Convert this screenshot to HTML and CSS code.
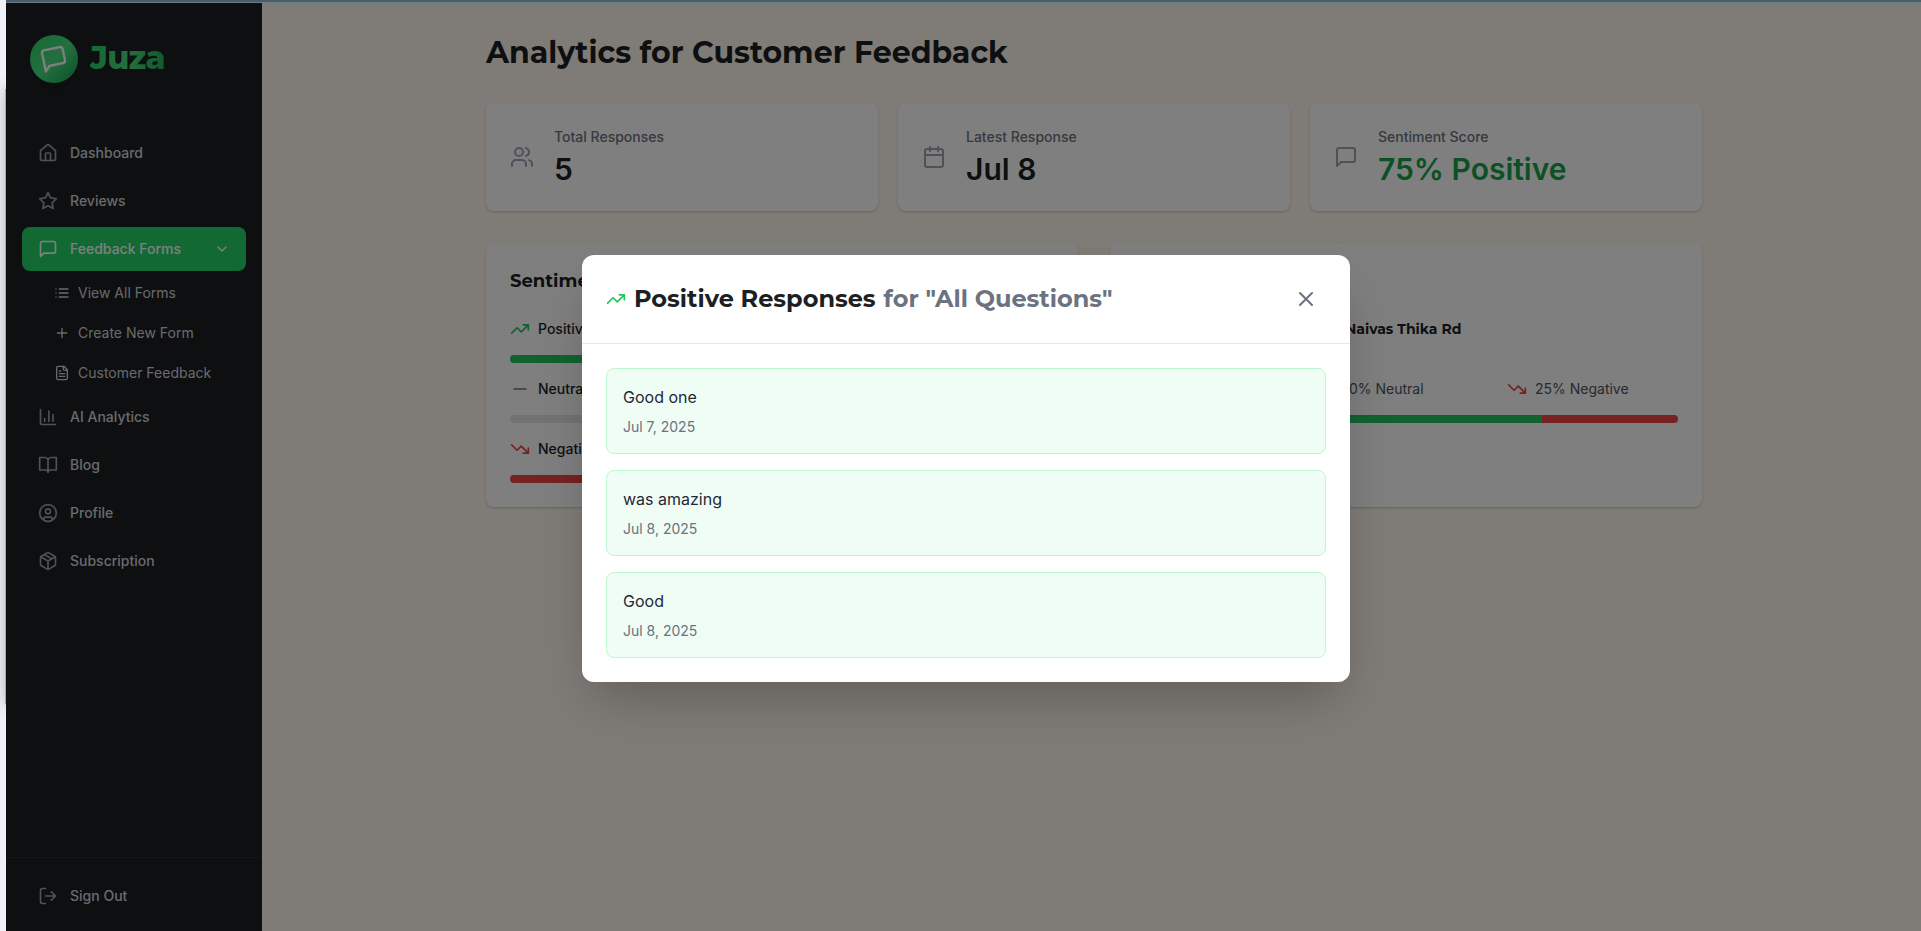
FILE: index.html
```html
<!DOCTYPE html>
<html lang="en">
<head>
    <meta charset="UTF-8">
    <meta name="viewport" content="width=device-width, initial-scale=1.0">
    <title>Juza - Customer Feedback Analytics</title>
    <link rel="stylesheet" href="styles.css">
</head>
<body>
    <!-- Icons -->
    <svg class="sprite" xmlns="http://www.w3.org/2000/svg">
        <symbol id="icon-message" viewBox="0 0 24 24"><path d="M21 15a2 2 0 0 1-2 2H7l-4 4V5a2 2 0 0 1 2-2h14a2 2 0 0 1 2 2z"/></symbol>
        <symbol id="icon-home" viewBox="0 0 24 24"><path d="M15 21v-8a1 1 0 0 0-1-1h-4a1 1 0 0 0-1 1v8"/><path d="M3 10a2 2 0 0 1 .709-1.528l7-5.999a2 2 0 0 1 2.582 0l7 5.999A2 2 0 0 1 21 10v9a2 2 0 0 1-2 2H5a2 2 0 0 1-2-2z"/></symbol>
        <symbol id="icon-star" viewBox="0 0 24 24"><polygon points="12 2 15.09 8.26 22 9.27 17 14.14 18.18 21.02 12 17.77 5.82 21.02 7 14.14 2 9.27 8.91 8.26 12 2"/></symbol>
        <symbol id="icon-chevron" viewBox="0 0 24 24"><path d="m6 9 6 6 6-6"/></symbol>
        <symbol id="icon-list" viewBox="0 0 24 24"><path d="M8 6h13M8 12h13M8 18h13M3 6h.01M3 12h.01M3 18h.01"/></symbol>
        <symbol id="icon-plus" viewBox="0 0 24 24"><path d="M5 12h14M12 5v14"/></symbol>
        <symbol id="icon-file" viewBox="0 0 24 24"><path d="M15 2H6a2 2 0 0 0-2 2v16a2 2 0 0 0 2 2h12a2 2 0 0 0 2-2V7Z"/><path d="M14 2v4a2 2 0 0 0 2 2h4M10 9H8M16 13H8M16 17H8"/></symbol>
        <symbol id="icon-chart" viewBox="0 0 24 24"><path d="M3 3v16a2 2 0 0 0 2 2h16M18 17V9M13 17V5M8 17v-3"/></symbol>
        <symbol id="icon-book" viewBox="0 0 24 24"><path d="M2 3h6a4 4 0 0 1 4 4v14a3 3 0 0 0-3-3H2zM22 3h-6a4 4 0 0 0-4 4v14a3 3 0 0 1 3-3h7z"/></symbol>
        <symbol id="icon-user" viewBox="0 0 24 24"><circle cx="12" cy="12" r="10"/><circle cx="12" cy="10" r="3"/><path d="M7 20.66V19a2 2 0 0 1 2-2h6a2 2 0 0 1 2 2v1.66"/></symbol>
        <symbol id="icon-package" viewBox="0 0 24 24"><path d="m7.5 4.27 9 5.15"/><path d="M21 8a2 2 0 0 0-1-1.73l-7-4a2 2 0 0 0-2 0l-7 4A2 2 0 0 0 3 8v8a2 2 0 0 0 1 1.73l7 4a2 2 0 0 0 2 0l7-4A2 2 0 0 0 21 16Z"/><path d="m3.3 7 8.7 5 8.7-5M12 22V12"/></symbol>
        <symbol id="icon-logout" viewBox="0 0 24 24"><path d="M9 21H5a2 2 0 0 1-2-2V5a2 2 0 0 1 2-2h4M16 17l5-5-5-5M21 12H9"/></symbol>
        <symbol id="icon-users" viewBox="0 0 24 24"><path d="M16 21v-2a4 4 0 0 0-4-4H6a4 4 0 0 0-4 4v2"/><circle cx="9" cy="7" r="4"/><path d="M22 21v-2a4 4 0 0 0-3-3.87M16 3.13a4 4 0 0 1 0 7.75"/></symbol>
        <symbol id="icon-calendar" viewBox="0 0 24 24"><path d="M8 2v4M16 2v4M3 10h18"/><rect x="3" y="4" width="18" height="18" rx="2"/></symbol>
        <symbol id="icon-up" viewBox="0 0 24 24"><path d="M22 7l-8.5 8.5-5-5L2 17M16 7h6v6"/></symbol>
        <symbol id="icon-down" viewBox="0 0 24 24"><path d="M22 17l-8.5-8.5-5 5L2 7M16 17h6v-6"/></symbol>
        <symbol id="icon-minus" viewBox="0 0 24 24"><path d="M5 12h14"/></symbol>
        <symbol id="icon-close" viewBox="0 0 24 24"><path d="M18 6 6 18M6 6l12 12"/></symbol>
    </svg>

    <div class="top-strip"></div>
    <div class="backdrop-panel"></div>

    <div class="app">
        <aside class="sidebar">
            <div class="logo">
                <span class="logo-mark"><svg class="icon"><use href="#icon-message"/></svg></span>
                <span class="logo-text">Juza</span>
            </div>

            <nav class="nav">
                <a class="nav-item"><svg class="icon"><use href="#icon-home"/></svg>Dashboard</a>
                <a class="nav-item"><svg class="icon"><use href="#icon-star"/></svg>Reviews</a>
                <div class="nav-group">
                    <a class="nav-item active"><svg class="icon"><use href="#icon-message"/></svg>Feedback Forms<svg class="icon chevron"><use href="#icon-chevron"/></svg></a>
                    <div class="subnav">
                        <a class="subnav-item"><svg class="icon"><use href="#icon-list"/></svg>View All Forms</a>
                        <a class="subnav-item"><svg class="icon"><use href="#icon-plus"/></svg>Create New Form</a>
                        <a class="subnav-item"><svg class="icon"><use href="#icon-file"/></svg>Customer Feedback</a>
                    </div>
                </div>
                <a class="nav-item"><svg class="icon"><use href="#icon-chart"/></svg>AI Analytics</a>
                <a class="nav-item"><svg class="icon"><use href="#icon-book"/></svg>Blog</a>
                <a class="nav-item"><svg class="icon"><use href="#icon-user"/></svg>Profile</a>
                <a class="nav-item"><svg class="icon"><use href="#icon-package"/></svg>Subscription</a>
            </nav>

            <div class="sidebar-footer">
                <a class="nav-item"><svg class="icon"><use href="#icon-logout"/></svg>Sign Out</a>
            </div>
        </aside>

        <main class="main">
            <div class="container">
                <h1>Analytics for Customer Feedback</h1>

                <div class="stats">
                    <div class="card stat">
                        <svg class="icon"><use href="#icon-users"/></svg>
                        <div>
                            <p class="stat-label">Total Responses</p>
                            <p class="stat-value">5</p>
                        </div>
                    </div>
                    <div class="card stat">
                        <svg class="icon"><use href="#icon-calendar"/></svg>
                        <div>
                            <p class="stat-label">Latest Response</p>
                            <p class="stat-value">Jul 8</p>
                        </div>
                    </div>
                    <div class="card stat">
                        <svg class="icon"><use href="#icon-message"/></svg>
                        <div>
                            <p class="stat-label">Sentiment Score</p>
                            <p class="stat-value positive">75% Positive</p>
                        </div>
                    </div>
                </div>

                <div class="panels">
                    <section class="card panel">
                        <h2>Sentime</h2>
                        <div class="sentiment">
                            <div class="sentiment-label"><svg class="icon green"><use href="#icon-up"/></svg>Positiv</div>
                            <div class="bar"><div class="fill-green" style="width: 75%"></div></div>
                        </div>
                        <div class="sentiment">
                            <div class="sentiment-label"><svg class="icon gray"><use href="#icon-minus"/></svg>Neutra</div>
                            <div class="bar"></div>
                        </div>
                        <div class="sentiment">
                            <div class="sentiment-label"><svg class="icon red"><use href="#icon-down"/></svg>Negati</div>
                            <div class="bar"><div class="fill-red" style="width: 25%"></div></div>
                        </div>
                    </section>

                    <section class="card panel branch">
                        <h3>Naivas Thika Rd</h3>
                        <div class="shares">
                            <span class="share-neutral">0% Neutral</span>
                            <span class="share-negative"><svg class="icon red"><use href="#icon-down"/></svg>25% Negative</span>
                        </div>
                        <div class="bar">
                            <div class="fill-green" style="width: 75%"></div>
                            <div class="fill-red" style="width: 25%"></div>
                        </div>
                    </section>
                </div>
            </div>
        </main>

        <div class="overlay">
            <div class="modal">
                <div class="modal-header">
                    <svg class="icon green"><use href="#icon-up"/></svg>
                    <h2 class="modal-title">Positive Responses</h2>
                    <h2 class="modal-title modal-subject">for "All Questions"</h2>
                    <button class="close-btn" aria-label="Close"><svg class="icon"><use href="#icon-close"/></svg></button>
                </div>
                <div class="modal-body">
                    <div class="response">
                        <p class="response-text">Good one</p>
                        <p class="response-date">Jul 7, 2025</p>
                    </div>
                    <div class="response">
                        <p class="response-text">was amazing</p>
                        <p class="response-date">Jul 8, 2025</p>
                    </div>
                    <div class="response">
                        <p class="response-text">Good</p>
                        <p class="response-date">Jul 8, 2025</p>
                    </div>
                </div>
            </div>
        </div>
    </div>
</body>
</html>
```

FILE: styles.css
```css
* {
    margin: 0;
    padding: 0;
    box-sizing: border-box;
}

body {
    font-family: Inter, sans-serif;
    background: #eff3f9;
    color: #1c1f23;
    height: 100vh;
    overflow: hidden;
    padding-left: 6px;
    position: relative;
}

.sprite {
    display: none;
}

.icon {
    width: 20px;
    height: 20px;
    flex: none;
    fill: none;
    stroke: currentColor;
    stroke-width: 2;
    stroke-linecap: round;
    stroke-linejoin: round;
}

.top-strip {
    height: 3px;
    background: #4a5e69;
    border-bottom: 1px solid #6b7f88;
}

/* Sliver of the window behind the app */
.backdrop-panel {
    position: absolute;
    left: 5px;
    top: 89px;
    width: 20px;
    height: 615px;
    background: #a5a8ac;
    box-shadow: 0 0 16px rgba(0, 0, 0, 0.25);
}

.app {
    position: relative;
    width: 1920px;
    height: 931px;
    display: flex;
    background: #fff7ed;
}

.sidebar {
    width: 256px;
    display: flex;
    flex-direction: column;
    background: #1c1f22;
    color: #d1d5db;
}

.logo {
    display: flex;
    align-items: center;
    gap: 12px;
    padding: 32px 24px;
}

.logo-mark {
    width: 48px;
    height: 48px;
    border-radius: 50%;
    display: flex;
    align-items: center;
    justify-content: center;
    color: #fff;
    background: linear-gradient(135deg, #25d366, #4ade80 50%, #16a34a);
    box-shadow: 0 10px 15px -3px rgba(0, 0, 0, 0.1);
}

.logo-mark .icon {
    width: 28px;
    height: 28px;
    transform: rotate(-12deg);
}

.logo-text {
    font-family: Montserrat, "Open Sans", sans-serif;
    font-size: 32px;
    line-height: 36px;
    padding-bottom: 2px;
    font-weight: 800;
    letter-spacing: -0.025em;
    background: linear-gradient(90deg, #25d366, #4ade80 50%, #1fb455);
    background-clip: text;
    -webkit-background-clip: text;
    color: transparent;
}

.nav {
    flex: 1;
    padding: 16px;
}

.nav-item {
    display: flex;
    align-items: center;
    gap: 12px;
    height: 44px;
    margin-bottom: 4px;
    padding: 0 16px;
    border-radius: 8px;
    font-size: 14px;
    line-height: 20px;
    font-weight: 500;
}

.nav-item .icon {
    color: #9ca3af;
}

.nav-item.active {
    background: #25d366;
    color: #fff;
    margin-bottom: 2px;
}

.nav-item.active .icon {
    color: #fff;
}

.nav-item .chevron {
    width: 16px;
    height: 16px;
    margin-left: auto;
}

.subnav {
    padding-left: 32px;
    margin-bottom: 2px;
}

.subnav-item {
    display: flex;
    align-items: center;
    gap: 8px;
    height: 40px;
    font-size: 14px;
    line-height: 20px;
}

.subnav-item .icon {
    width: 16px;
    height: 16px;
}

.sidebar-footer {
    border-top: 1px solid #26302f;
    padding: 16px;
}

.sidebar-footer .nav-item {
    margin-bottom: 0;
}

.main {
    flex: 1;
    padding: 32px;
}

.container {
    width: 1216px;
    margin: 0 auto;
}

h1,
h2,
h3 {
    font-family: Montserrat, "Open Sans", sans-serif;
    font-weight: 700;
}

h1 {
    font-size: 30px;
    line-height: 36px;
    margin-bottom: 32px;
}

.stats {
    display: grid;
    grid-template-columns: repeat(3, 1fr);
    gap: 20px;
    margin-bottom: 32px;
}

.card {
    background: #fff;
    border-radius: 8px;
    box-shadow: 0 1px 3px rgba(0, 0, 0, 0.1), 0 1px 2px rgba(0, 0, 0, 0.1);
}

.stat {
    display: flex;
    align-items: center;
    gap: 20px;
    height: 108px;
    padding: 0 24px;
}

.stat .icon {
    width: 24px;
    height: 24px;
    color: #9ca3af;
}

.stat-label {
    font-size: 14px;
    line-height: 20px;
    font-weight: 500;
    color: #6b7280;
}

.stat-value {
    font-size: 30px;
    line-height: 36px;
    font-weight: 600;
    margin-top: 4px;
}

.stat-value.positive {
    color: #16a34a;
}

.panels {
    display: grid;
    grid-template-columns: repeat(2, 1fr);
    gap: 32px;
}

.panel {
    height: 264px;
    padding: 24px;
}

.panel h2 {
    font-size: 18px;
    line-height: 28px;
    margin-bottom: 24px;
}

.sentiment {
    margin-bottom: 16px;
}

.sentiment-label {
    display: flex;
    align-items: center;
    gap: 8px;
    height: 20px;
    margin-bottom: 16px;
    font-size: 14px;
    line-height: 20px;
    font-weight: 500;
}

.bar {
    display: flex;
    height: 8px;
    border-radius: 4px;
    background: #e5e7eb;
    overflow: hidden;
}

.fill-green {
    background: #22c55e;
}

.fill-red {
    background: #ef4444;
}

.green {
    color: #22c55e;
}

.gray {
    color: #6b7280;
}

.red {
    color: #ef4444;
}

.branch h3 {
    font-size: 14px;
    line-height: 20px;
    margin: 52px 0 40px 211px;
}

.shares {
    display: flex;
    height: 20px;
    margin-bottom: 16px;
    font-size: 14px;
    line-height: 20px;
    color: #4b5563;
}

.share-neutral {
    margin-left: 215px;
    width: 158px;
}

.share-negative {
    display: flex;
    align-items: center;
    gap: 8px;
}

.overlay {
    position: absolute;
    inset: 0;
    display: flex;
    align-items: center;
    justify-content: center;
    background: rgba(0, 0, 0, 0.5);
}

.modal {
    width: 768px;
    background: #fff;
    border-radius: 12px;
    box-shadow: 0 25px 50px -12px rgba(0, 0, 0, 0.25);
}

.modal-header {
    display: flex;
    align-items: center;
    gap: 8px;
    height: 89px;
    padding: 0 24px;
    border-bottom: 1px solid #e5e7eb;
}

.modal-title {
    font-size: 24px;
    line-height: 32px;
}

.modal-subject {
    color: #6b7280;
}

.close-btn {
    width: 40px;
    height: 40px;
    margin-left: auto;
    display: flex;
    align-items: center;
    justify-content: center;
    border: none;
    background: none;
    color: #6b7280;
}

.close-btn .icon {
    width: 24px;
    height: 24px;
}

.modal-body {
    display: flex;
    flex-direction: column;
    gap: 16px;
    padding: 24px;
}

.response {
    padding: 16px;
    border: 1px solid #bbf7d0;
    border-radius: 8px;
    background: #f0fdf4;
}

.response-text {
    font-size: 16px;
    line-height: 24px;
    color: #1f2937;
}

.response-date {
    margin-top: 8px;
    font-size: 14px;
    line-height: 20px;
    color: #6b7280;
}
```
